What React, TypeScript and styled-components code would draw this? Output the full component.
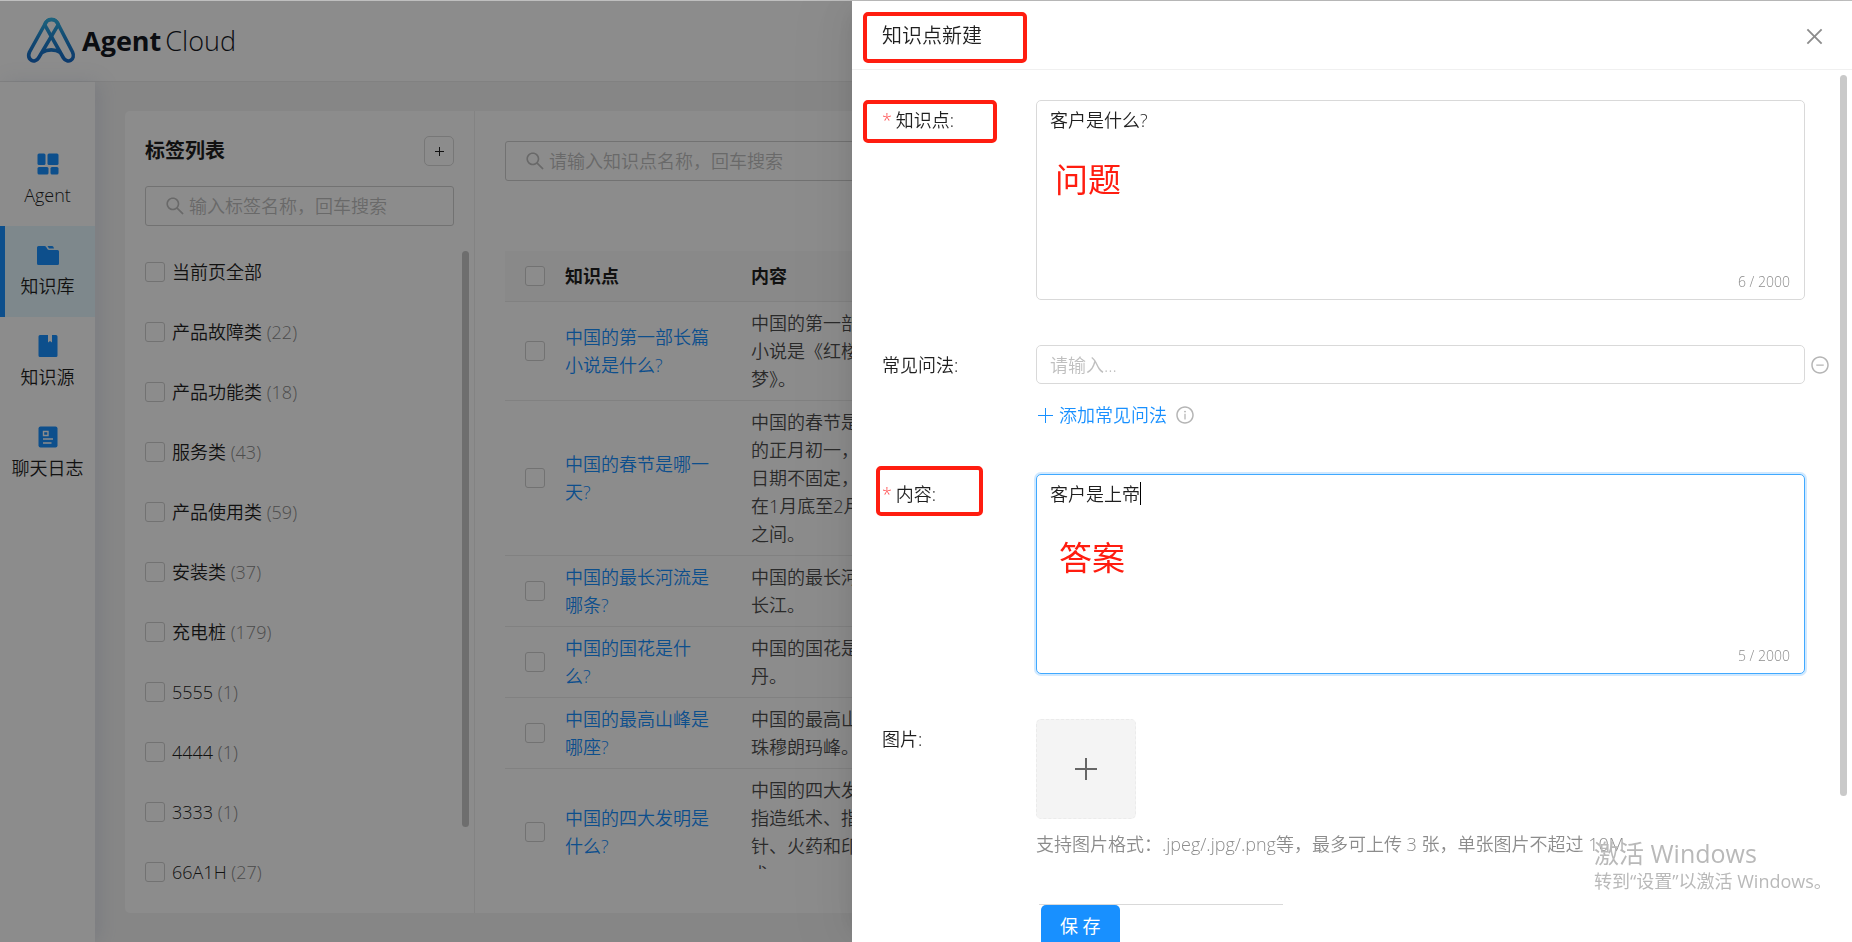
import React from 'react';
import styled, { createGlobalStyle, css } from 'styled-components';
import {
  AiOutlineSearch,
  AiOutlineClose,
  AiOutlineInfoCircle,
  AiOutlineMinusCircle,
} from 'react-icons/ai';

const FONT = '"Open Sans", "Noto Sans CJK SC", sans-serif';
const BLUE = '#1890ff';
const INK = '#1f1f1f';
const MARK = '#ff1d10';

const GlobalStyle = createGlobalStyle`
  *, *::before, *::after { box-sizing: border-box; }
  body {
    margin: 0;
    overflow: hidden;
    font-family: ${FONT};
    font-size: 18px;
    font-weight: 350;
    line-height: 28px;
    color: ${INK};
  }
  button, input, textarea {
    margin: 0;
    font: inherit;
    color: inherit;
  }
  button { cursor: pointer; }
`;

const Page = styled.div`
  display: flex;
  flex-direction: column;
  height: 100vh;
  border-top: 1px solid #bfbfbf;
  background: #f5f5f5;
`;

const Header = styled.header`
  display: flex;
  align-items: center;
  flex: none;
  gap: 6px;
  height: 81px;
  padding: 0 26px;
  border-bottom: 1px solid #ececec;
  background: #fff;
`;

const Brand = styled.span`
  display: flex;
  gap: 4px;
  font-size: 27px;
  line-height: 36px;
  font-weight: 350;
  color: #14181f;
`;

const BrandStrong = styled.strong`
  font-weight: 700;
`;

const Body = styled.div`
  display: flex;
  flex: 1;
  min-height: 0;
`;

const Sidebar = styled.nav`
  flex: none;
  width: 95px;
  padding-top: 53px;
  background: #fff;
  box-shadow: 4px 0 20px rgba(100, 120, 170, 0.16);
`;

const NavItem = styled.a<{ $active?: boolean }>`
  display: flex;
  flex-direction: column;
  align-items: center;
  gap: 5px;
  height: 91px;
  padding-top: 17px;
  color: ${INK};
  text-decoration: none;
  white-space: nowrap;
  ${(p) =>
    p.$active &&
    css`
      background: #e6f7ff;
      box-shadow: inset 5px 0 ${BLUE};
    `}
`;

const Main = styled.main`
  display: flex;
  flex: 1;
  min-width: 0;
  padding: 29px 30px;
`;

const Card = styled.div`
  display: flex;
  flex: 1;
  min-width: 0;
  overflow: hidden;
  border-radius: 5px;
  background: #fff;
`;

const TagPanel = styled.section`
  display: flex;
  flex-direction: column;
  flex: none;
  width: 350px;
  padding: 25px 5px 20px 20px;
  border-right: 1px solid #efefef;
`;

const TagHead = styled.div`
  display: flex;
  align-items: center;
  justify-content: space-between;
  margin: 0 15px 20px 0;
`;

const TagTitle = styled.h2`
  margin: 0;
  font-size: 20px;
  line-height: 30px;
  font-weight: 700;
`;

const SmallButton = styled.button`
  display: grid;
  place-items: center;
  width: 30px;
  height: 30px;
  padding: 0;
  border: 1px solid #d9d9d9;
  border-radius: 5px;
  background: #fff;
`;

const SearchBox = styled.label`
  display: flex;
  align-items: center;
  flex: none;
  gap: 3px;
  height: 40px;
  padding: 0 18px;
  border: 1px solid #cfcfcf;
  border-radius: 3px;
  color: #bfbfbf;
`;

const TagSearch = styled(SearchBox)`
  margin-right: 15px;
`;

const SearchInput = styled.input`
  flex: 1;
  min-width: 0;
  padding: 0;
  border: 0;
  outline: 0;
  background: transparent;
  &::placeholder {
    color: #bfbfbf;
    opacity: 1;
  }
`;

const TagScroll = styled.div`
  display: flex;
  justify-content: space-between;
  flex: 1;
  min-height: 0;
  margin-top: 16px;
  overflow: hidden;
`;

const TagList = styled.ul`
  margin: 0;
  padding: 0;
  list-style: none;
`;

const TagRow = styled.label`
  display: flex;
  align-items: center;
  gap: 7px;
  height: 60px;
`;

const Count = styled.span`
  color: #8c8c8c;
`;

const Checkbox = styled.input.attrs({ type: 'checkbox' })`
  display: block;
  flex: none;
  appearance: none;
  width: 20px;
  height: 20px;
  border: 1px solid #cfcfcf;
  border-radius: 3px;
  background: #fff;
`;

const TagThumb = styled.span`
  width: 7px;
  height: 576px;
  margin-top: 9px;
  border-radius: 4px;
  background: #c8c8c8;
`;

const ListPanel = styled.section`
  display: flex;
  flex-direction: column;
  flex: 1;
  min-width: 0;
  padding: 30px 30px 44px;
`;

const TableScroll = styled.div`
  flex: 1;
  min-height: 0;
  margin-top: 70px;
  overflow: hidden;
`;

const Table = styled.table`
  width: 100%;
  border-collapse: separate;
  border-spacing: 0;
  table-layout: fixed;
`;

const HeadCell = styled.th<{ $width?: number }>`
  width: ${(p) => (p.$width ? `${p.$width}px` : 'auto')};
  height: 51px;
  padding: 0 20px;
  border-bottom: 1px solid #ebebeb;
  background: #fafafa;
  font-weight: 700;
  text-align: left;
`;

const Cell = styled.td`
  padding: 7px 20px;
  border-bottom: 1px solid #ebebeb;
  color: #4d4d4d;
  vertical-align: middle;
`;

const HeadTick = styled(HeadCell)`
  padding-right: 0;
`;

const TickCell = styled(Cell)`
  padding-right: 0;
`;

const TopicLink = styled.a`
  color: ${BLUE};
  text-decoration: none;
`;

const Mask = styled.div`
  position: fixed;
  inset: 1px 0 0;
  background: rgba(0, 0, 0, 0.45);
`;

const Drawer = styled.aside`
  position: fixed;
  inset: 1px 0 0 auto;
  display: flex;
  flex-direction: column;
  width: 54%;
  background: #fff;
  box-shadow:
    -8px 0 20px -10px rgba(0, 0, 0, 0.08),
    -11px 0 35px rgba(0, 0, 0, 0.05),
    -15px 0 60px 20px rgba(0, 0, 0, 0.03);
`;

const DrawerHead = styled.header`
  position: relative;
  display: flex;
  align-items: center;
  justify-content: space-between;
  flex: none;
  height: 69px;
  padding: 2px 26px 0 30px;
  border-bottom: 1px solid #f0f0f0;
`;

const DrawerTitle = styled.h1`
  margin: 0;
  font-size: 20px;
  line-height: 28px;
  font-weight: 350;
`;

const IconButton = styled.button`
  display: grid;
  place-items: center;
  flex: none;
  padding: 0;
  border: 0;
  background: transparent;
  color: #8c8c8c;
`;

const DrawerBody = styled.div`
  display: flex;
  flex: 1;
  min-height: 0;
  overflow: hidden;
`;

const Form = styled.form`
  display: flex;
  flex-direction: column;
  flex: 1;
  gap: 45px;
  min-width: 0;
  padding: 30px 35px 0 30px;
`;

const DrawerThumb = styled.span`
  flex: none;
  width: 7px;
  height: 721px;
  margin: 5px 5px 0 0;
  border-radius: 4px;
  background: #c9c9c9;
`;

const Field = styled.div`
  position: relative;
  display: flex;
  flex: none;
  align-items: flex-start;
`;

const Label = styled.label<{ $required?: boolean }>`
  flex: none;
  width: 154px;
  padding-top: 6px;
  ${(p) =>
    p.$required &&
    css`
      &::before {
        content: '*';
        margin-right: 4px;
        color: #ff4d4f;
      }
    `}
`;

const Control = styled.div`
  position: relative;
  flex: 1;
  min-width: 0;
`;

const TextArea = styled.textarea<{ $focused?: boolean }>`
  display: block;
  width: 100%;
  height: 200px;
  padding: 5px 13px;
  border: 1px solid #d9d9d9;
  border-radius: 5px;
  outline: 0;
  resize: none;
  background: #fff;
  ${(p) =>
    p.$focused &&
    css`
      border-color: #40a9ff;
      box-shadow: 0 0 0 2px rgba(24, 144, 255, 0.2);
    `}
`;

const Counter = styled.span`
  position: absolute;
  right: 15px;
  bottom: 7px;
  font-size: 14px;
  line-height: 22px;
  color: #8c8c8c;
`;

const Caret = styled.span`
  position: absolute;
  top: 8px;
  left: calc(14px + 5em);
  width: 1px;
  height: 23px;
  background: #000;
`;

const InputRow = styled.div`
  display: flex;
  align-items: center;
  gap: 5px;
  margin-right: -25px;
`;

const TextInput = styled.input`
  flex: 1;
  min-width: 0;
  height: 39px;
  padding: 0 13px;
  border: 1px solid #d9d9d9;
  border-radius: 5px;
  outline: 0;
  &::placeholder {
    color: #bfbfbf;
    opacity: 1;
  }
`;

const MutedIconButton = styled(IconButton)`
  color: #b5b5b5;
`;

const AddRow = styled.div`
  display: flex;
  align-items: center;
  gap: 8px;
  margin-top: 17px;
  padding-left: 2px;
  color: #b5b5b5;
`;

const AddButton = styled.button`
  display: flex;
  align-items: center;
  gap: 6px;
  padding: 0;
  border: 0;
  background: transparent;
  color: ${BLUE};
`;

const UploadButton = styled.button`
  display: grid;
  place-items: center;
  width: 100px;
  height: 100px;
  padding: 0;
  border: 1px dashed #ebebeb;
  border-radius: 5px;
  background: #f4f4f4;
  color: #666;
`;

const Hint = styled.p`
  margin: 11px 0 1px;
  color: #8c8c8c;
  white-space: nowrap;
`;

const SaveBar = styled.div`
  width: 244px;
  margin-left: 157px;
  padding-left: 2px;
  border-top: 1px solid #d9d9d9;
`;

const SaveButton = styled.button`
  height: 41px;
  padding: 0 19px;
  border: 0;
  border-radius: 5px;
  background: ${BLUE};
  color: #fff;
  font-weight: 400;
`;

const Frame = styled.span<{ $x: number; $y: number; $w: number; $h: number }>`
  position: absolute;
  left: ${(p) => p.$x}px;
  top: ${(p) => p.$y}px;
  width: ${(p) => p.$w}px;
  height: ${(p) => p.$h}px;
  border: 4px solid ${MARK};
  border-radius: 5px;
  pointer-events: none;
`;

const Note = styled.span<{ $x: number; $y: number }>`
  position: absolute;
  left: ${(p) => p.$x}px;
  top: ${(p) => p.$y}px;
  font-size: 33px;
  line-height: 40px;
  font-weight: 400;
  color: ${MARK};
  pointer-events: none;
`;

const Watermark = styled.div`
  position: fixed;
  right: 20px;
  bottom: 48px;
  width: 238px;
  color: #b9b9b9;
  font-weight: 400;
  white-space: nowrap;
  pointer-events: none;
`;

const WatermarkTitle = styled.div`
  font-size: 25px;
  line-height: 30px;
`;

const WatermarkText = styled.div`
  font-size: 18px;
  line-height: 26px;
`;

const Logo = () => (
  <svg width="50" height="50" viewBox="0 0 50 50" fill="none" aria-hidden="true">
    <defs>
      <linearGradient id="logo" gradientUnits="userSpaceOnUse" x1="0" y1="2" x2="0" y2="47">
        <stop offset="0" stopColor="#36b6e6" />
        <stop offset="0.45" stopColor="#1f86d0" />
        <stop offset="1" stopColor="#1668c4" />
      </linearGradient>
    </defs>
    <g stroke="url(#logo)" strokeWidth="3.6" strokeLinejoin="round">
      <path d="M19 8C21.5 2 29.500 2 32 8L46.500 36C50 43.500 41.500 48.500 37.500 42L20.600 12.200C19 9.400 18.600 9 19 8" />
      <path d="M32 8C29.500 2 21.500 2 19 8L3.500 36C.500 43.500 8.500 48.500 12.500 42L30.200 12.200C31.800 9.400 32.400 9 32 8" />
      <path d="M16 36.500C21.500 33 29 33 34.500 36.500" />
    </g>
  </svg>
);

const PlusIcon = ({ size, stroke = 1 }: { size: number; stroke?: number }) => (
  <svg width={size} height={size} viewBox={`0 0 ${size} ${size}`} aria-hidden="true">
    <path
      d={`M0 ${size / 2}H${size}M${size / 2} 0V${size}`}
      stroke="currentColor"
      strokeWidth={stroke}
    />
  </svg>
);

const AgentIcon = () => (
  <svg width="24" height="24" viewBox="0 0 24 24" fill={BLUE} aria-hidden="true">
    <rect x="1.500" y="1.500" width="8" height="11.500" rx="1.500" />
    <rect x="11.500" y="1.500" width="11" height="11.500" rx="1.500" />
    <rect x="1.500" y="15" width="11" height="7.500" rx="1.500" />
    <rect x="14.500" y="15" width="8" height="7.500" rx="1.500" />
  </svg>
);

const FolderIcon = () => (
  <svg width="24" height="24" viewBox="0 0 24 24" fill={BLUE} aria-hidden="true">
    <path d="M1 4.500Q1 3 2.500 3H8.500Q9.500 3 10.200 3.900L11.500 6.200Q12 7 13 7H21.500Q23 7 23 8.500V20.500Q23 22 21.500 22H2.500Q1 22 1 20.500Z" />
    <path d="M11.500 3H16Q17 3 17.500 4L18 5.500H13Z" />
  </svg>
);

const BookIcon = () => (
  <svg width="24" height="24" viewBox="0 0 24 24" fill={BLUE} aria-hidden="true">
    <path d="M4 1H12V8.500L14 7L16 8.500V1H20Q21.500 1 21.500 2.500V21.500Q21.500 23 20 23H4Q2.500 23 2.500 21.500V2.500Q2.500 1 4 1Z" />
  </svg>
);

const LogIcon = () => (
  <svg width="24" height="24" viewBox="0 0 24 24" aria-hidden="true">
    <rect x="2.500" y="1.500" width="19" height="21" rx="2" fill={BLUE} />
    <path
      d="M7.500 6.500H12V10.500H7.500ZM7 14H17M7 18H15.500"
      fill="none"
      stroke="#fff"
      strokeWidth="1.400"
    />
  </svg>
);

const navItems = [
  { name: 'Agent', icon: <AgentIcon /> },
  { name: '知识库', icon: <FolderIcon />, active: true },
  { name: '知识源', icon: <BookIcon /> },
  { name: '聊天日志', icon: <LogIcon /> },
];

const tags: { name: string; count?: number }[] = [
  { name: '当前页全部' },
  { name: '产品故障类', count: 22 },
  { name: '产品功能类', count: 18 },
  { name: '服务类', count: 43 },
  { name: '产品使用类', count: 59 },
  { name: '安装类', count: 37 },
  { name: '充电桩', count: 179 },
  { name: '5555', count: 1 },
  { name: '4444', count: 1 },
  { name: '3333', count: 1 },
  { name: '66A1H', count: 27 },
];

const topics = [
  ['中国的第一部长篇小说是什么?', '中国的第一部长篇小说是《红楼梦》。'],
  ['中国的春节是哪一天?', '中国的春节是农历的正月初一，具体日期不固定，一般在1月底至2月中旬之间。'],
  ['中国的最长河流是哪条?', '中国的最长河流是长江。'],
  ['中国的国花是什么?', '中国的国花是牡丹。'],
  ['中国的最高山峰是哪座?', '中国的最高山峰是珠穆朗玛峰。'],
  ['中国的四大发明是什么?', '中国的四大发明是指造纸术、指南针、火药和印刷术。'],
];

export default function App() {
  return (
    <>
      <GlobalStyle />
      <Page>
        <Header>
          <Logo />
          <Brand>
            <BrandStrong>Agent</BrandStrong>
            <span>Cloud</span>
          </Brand>
        </Header>
        <Body>
          <Sidebar>
            {navItems.map((item) => (
              <NavItem key={item.name} href="#" $active={item.active}>
                {item.icon}
                {item.name}
              </NavItem>
            ))}
          </Sidebar>
          <Main>
            <Card>
              <TagPanel>
                <TagHead>
                  <TagTitle>标签列表</TagTitle>
                  <SmallButton type="button" aria-label="新增标签">
                    <PlusIcon size={9} />
                  </SmallButton>
                </TagHead>
                <TagSearch>
                  <AiOutlineSearch size={22} />
                  <SearchInput placeholder="输入标签名称，回车搜索" />
                </TagSearch>
                <TagScroll>
                  <TagList>
                    {tags.map((tag) => (
                      <li key={tag.name}>
                        <TagRow>
                          <Checkbox />
                          <span>
                            {tag.name}
                            {tag.count !== undefined && <Count> ({tag.count})</Count>}
                          </span>
                        </TagRow>
                      </li>
                    ))}
                  </TagList>
                  <TagThumb />
                </TagScroll>
              </TagPanel>
              <ListPanel>
                <SearchBox>
                  <AiOutlineSearch size={22} />
                  <SearchInput placeholder="请输入知识点名称，回车搜索" />
                </SearchBox>
                <TableScroll>
                  <Table>
                    <thead>
                      <tr>
                        <HeadTick $width={40}>
                          <Checkbox aria-label="全选" />
                        </HeadTick>
                        <HeadCell $width={186}>知识点</HeadCell>
                        <HeadCell $width={189}>内容</HeadCell>
                        <HeadCell />
                      </tr>
                    </thead>
                    <tbody>
                      {topics.map(([topic, content]) => (
                        <tr key={topic}>
                          <TickCell>
                            <Checkbox aria-label={topic} />
                          </TickCell>
                          <Cell>
                            <TopicLink href="#">{topic}</TopicLink>
                          </Cell>
                          <Cell>{content}</Cell>
                          <Cell />
                        </tr>
                      ))}
                    </tbody>
                  </Table>
                </TableScroll>
              </ListPanel>
            </Card>
          </Main>
        </Body>
      </Page>
      <Mask />
      <Drawer>
        <DrawerHead>
          <DrawerTitle>知识点新建</DrawerTitle>
          <IconButton type="button" aria-label="关闭">
            <AiOutlineClose size={23} />
          </IconButton>
          <Frame $x={11} $y={11} $w={164} $h={51} />
        </DrawerHead>
        <DrawerBody>
          <Form>
            <Field>
              <Label htmlFor="topic" $required>
                知识点:
              </Label>
              <Control>
                <TextArea id="topic" defaultValue="客户是什么?" />
                <Counter>6 / 2000</Counter>
                <Note $x={19} $y={60}>
                  问题
                </Note>
              </Control>
              <Frame $x={-19} $y={0} $w={134} $h={43} />
            </Field>
            <Field>
              <Label htmlFor="variant">常见问法:</Label>
              <Control>
                <InputRow>
                  <TextInput id="variant" placeholder="请输入..." />
                  <MutedIconButton type="button" aria-label="删除">
                    <AiOutlineMinusCircle size={20} />
                  </MutedIconButton>
                </InputRow>
                <AddRow>
                  <AddButton type="button">
                    <PlusIcon size={15} />
                    添加常见问法
                  </AddButton>
                  <AiOutlineInfoCircle size={20} />
                </AddRow>
              </Control>
            </Field>
            <Field>
              <Label htmlFor="content" $required>
                内容:
              </Label>
              <Control>
                <TextArea id="content" defaultValue="客户是上帝" $focused />
                <Caret />
                <Counter>5 / 2000</Counter>
                <Note $x={23} $y={64}>
                  答案
                </Note>
              </Control>
              <Frame $x={-6} $y={-8} $w={107} $h={50} />
            </Field>
            <Field>
              <Label htmlFor="picture">图片:</Label>
              <Control>
                <UploadButton id="picture" type="button" aria-label="上传图片">
                  <PlusIcon size={22} stroke={2} />
                </UploadButton>
                <Hint>支持图片格式：.jpeg/.jpg/.png等，最多可上传 3 张，单张图片不超过 10M</Hint>
              </Control>
            </Field>
            <SaveBar>
              <SaveButton type="submit">保 存</SaveButton>
            </SaveBar>
          </Form>
          <DrawerThumb />
        </DrawerBody>
      </Drawer>
      <Watermark>
        <WatermarkTitle>激活 Windows</WatermarkTitle>
        <WatermarkText>转到“设置”以激活 Windows。</WatermarkText>
      </Watermark>
    </>
  );
}
